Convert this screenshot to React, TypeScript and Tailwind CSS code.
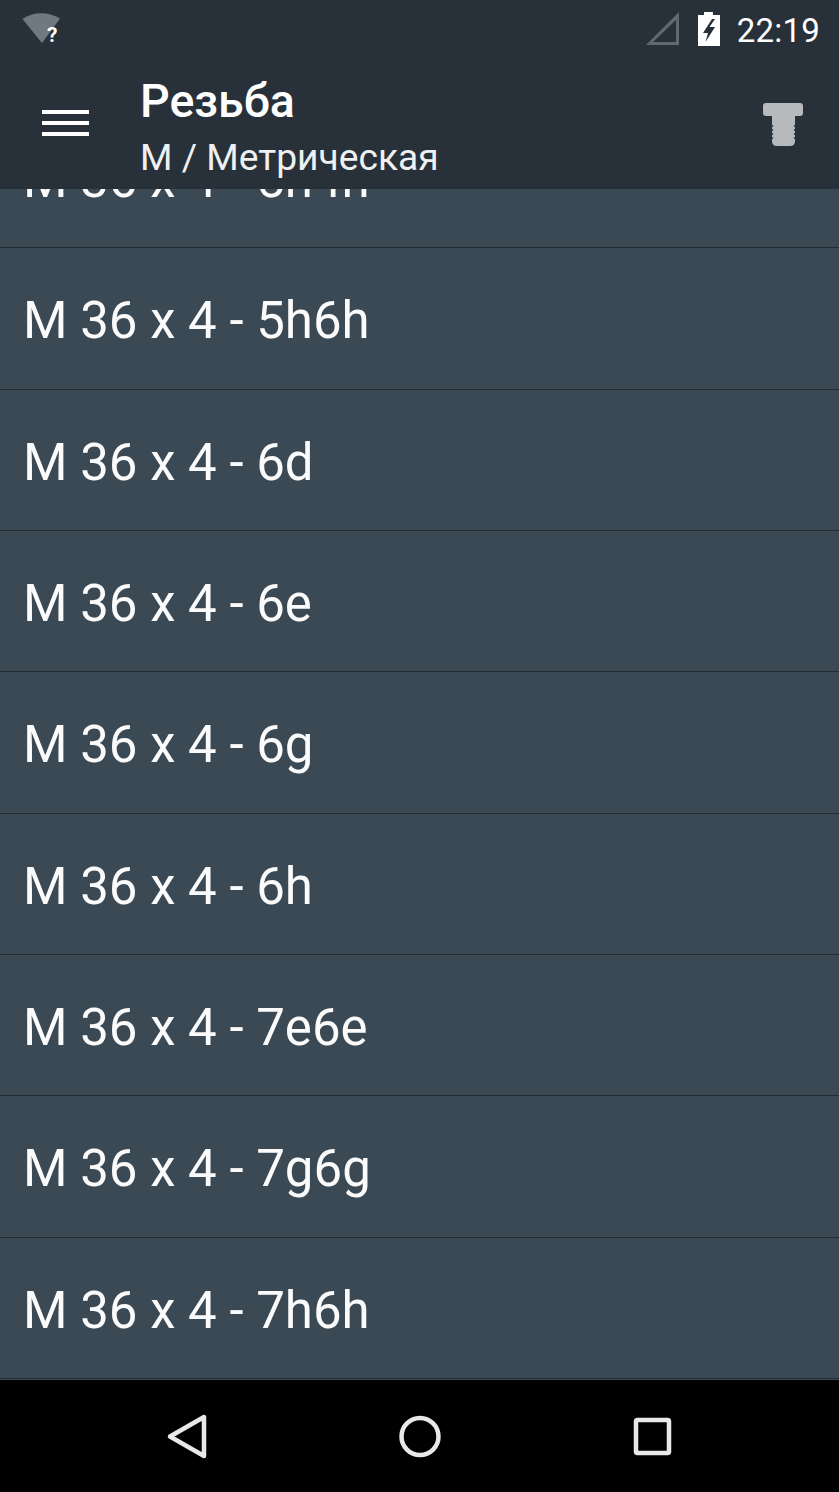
import React from 'react';

const threads = ['5h4h', '5h6h', '6d', '6e', '6g', '6h', '7e6e', '7g6g', '7h6h'];

const WifiIcon = () => (
  <svg width="44" height="36" viewBox="0 0 44 36" className="absolute left-[21px] top-[12px]">
    <path d="M1.5 7 C12 -0.5 27 -0.5 39 6.5 L21 31 Z" fill="#6f7a80" />
    <text x="26" y="30" fill="#ffffff" fontSize="21" fontWeight="700" fontFamily="Roboto, sans-serif">?</text>
  </svg>
);

const SignalIcon = () => (
  <svg width="36" height="36" viewBox="0 0 36 36" className="shrink-0">
    <path d="M34 0 V33 H1 Z M31 8 L8 30 H31 Z" fill="#5f6a70" fillRule="evenodd" />
  </svg>
);

const BatteryIcon = () => (
  <svg width="24" height="36" viewBox="0 0 24 36" className="shrink-0">
    <path d="M7 0 H16 V3 H23 V34 H1 V3 H7 Z" fill="#ffffff" />
    <path d="M15 7 L6 21 H11 L8.5 30 L18 15 H12.5 L18 7 Z" fill="#263038" />
  </svg>
);

const BoltIcon = () => (
  <svg width="40" height="44" viewBox="0 0 40 44">
    <path d="M3 0 H37 Q40 0 40 3 V10 Q40 13 37 13 H32 V38 Q32 43 27 43 H14 Q9 43 9 38 V13 H3 Q0 13 0 10 V3 Q0 0 3 0 Z" fill="#b6babd" />
    <path d="M8 21 L10.5 23 L8 25 L10.5 27 L8 29 L10.5 31 L8 33 L10.5 35 L8 37 Z M33 21 L30.5 23 L33 25 L30.5 27 L33 29 L30.5 31 L33 33 L30.5 35 L33 37 Z" fill="#283139" />
  </svg>
);

export default function App() {
  return (
    <div className="flex h-[1492px] w-[839px] flex-col overflow-hidden bg-black font-['Roboto',sans-serif] text-white">
      {/* Status bar + toolbar */}
      <header className="relative h-[189px] shrink-0 bg-[#283139]">
        <WifiIcon />
        <div className="flex h-[60px] items-center justify-end pr-[19px]">
          <SignalIcon />
          <div className="ml-[16px] flex">
            <BatteryIcon />
          </div>
          <span className="ml-[16px] text-[33px] leading-none tracking-[0.2px]">22:19</span>
        </div>
        <div className="flex h-[129px] items-start">
          <button className="ml-[42px] mt-[50px] flex w-[47px] flex-col gap-[7px]">
            <span className="h-[4px] bg-white" />
            <span className="h-[4px] bg-white" />
            <span className="h-[4px] bg-white" />
          </button>
          <div className="ml-[51px] flex-1">
            <div className="mt-[12px] text-[46.5px] font-medium leading-[58px]">Резьба</div>
            <div className="mt-[1px] text-[37.2px] leading-[52px] text-[#eef0f1]">M / Метрическая</div>
          </div>
          <div className="mr-[36px] mt-[43px]">
            <BoltIcon />
          </div>
        </div>
      </header>

      {/* Thread list, scrolled so the first row sits under the toolbar */}
      <div className="flex-1 overflow-hidden bg-[#3a4953]">
        <div className="-mt-[82px]">
          {threads.map((t) => (
            <div key={t} className="flex h-[141.33px] items-center border-b border-[#232d34] pl-[23px] pt-[6px] text-[51px] text-[#fbfbfb]">
              M 36 x 4 - {t}
            </div>
          ))}
        </div>
      </div>

      {/* Nav bar */}
      <nav className="relative flex h-[112px] shrink-0 items-center justify-center bg-black">
        <svg width="44" height="48" viewBox="0 0 44 48" className="absolute left-[164px] top-[33px]">
          <path d="M40 4 V43 L6 23.5 Z" fill="none" stroke="#e8e8e8" strokeWidth="4.5" strokeLinejoin="round" />
        </svg>
        <svg width="44" height="44" viewBox="0 0 44 44" className="absolute left-[398px] top-[35px]">
          <circle cx="22" cy="21.5" r="18.5" fill="none" stroke="#e8e8e8" strokeWidth="4.5" />
        </svg>
        <svg width="40" height="40" viewBox="0 0 40 40" className="absolute left-[633px] top-[37px]">
          <rect x="3" y="3" width="33" height="33" rx="1.5" fill="none" stroke="#e8e8e8" strokeWidth="4.5" />
        </svg>
      </nav>
    </div>
  );
}
